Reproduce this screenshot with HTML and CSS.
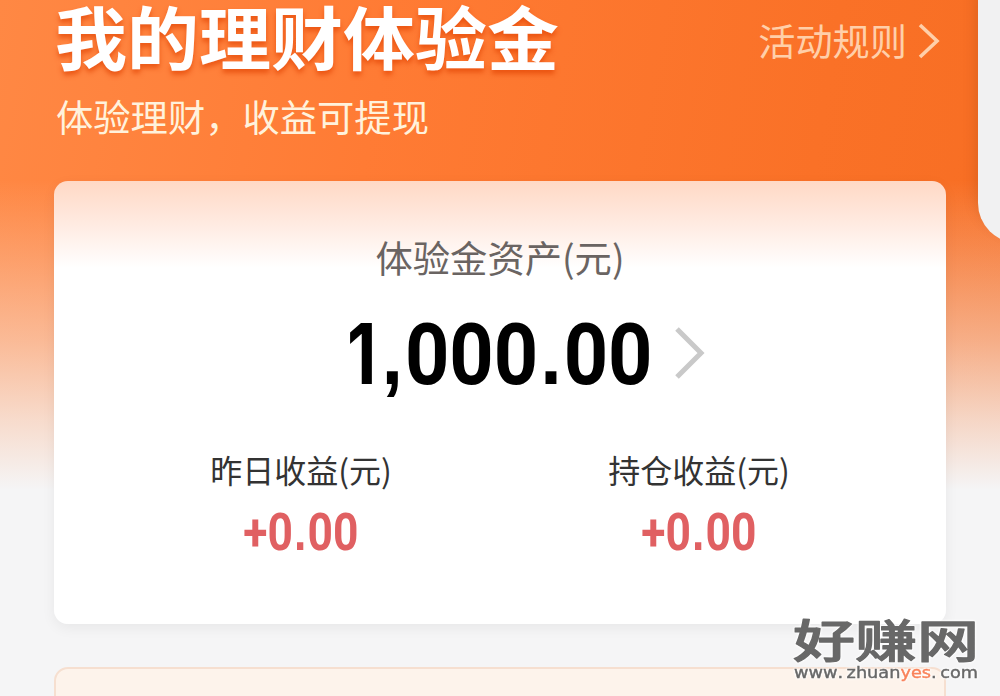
FILE: index.html
```
<!DOCTYPE html>
<html lang="zh-CN">
<head>
    <meta charset="UTF-8">
    <meta name="viewport" content="width=device-width, initial-scale=1.0">
    <title>我的理财体验金</title>
    <link rel="stylesheet" href="styles.css">
</head>
<body>
    <div class="page">
        <header class="header">
            <div>
                <h1>我的理财体验金</h1>
                <p class="subtitle">体验理财，收益可提现</p>
            </div>
            <a class="rules">
                <span>活动规则</span>
                <svg width="22" height="36" viewBox="0 0 22 36"><path d="M2 2 L19 18 L2 34"/></svg>
            </a>
        </header>

        <main class="card">
            <div class="card-label">体验金资产(元)</div>
            <div class="amount">
                <span class="amount-value"><span class="one">1</span><span class="punct">,</span>000<span class="punct">.</span>00</span>
                <svg width="30" height="52" viewBox="0 0 30 52"><path d="M2 2 L26 26 L2 50"/></svg>
            </div>
            <div class="stats">
                <div class="stat">
                    <div class="stat-label">昨日收益(元)</div>
                    <div class="stat-value">+0<span class="punct">.</span>00</div>
                </div>
                <div class="stat">
                    <div class="stat-label">持仓收益(元)</div>
                    <div class="stat-value">+0<span class="punct">.</span>00</div>
                </div>
            </div>
        </main>

        <section class="next-card"></section>
    </div>

    <!-- Panel lateral -->
    <div class="side">
        <div class="side-panel"></div>
    </div>

    <!-- Marca de agua -->
    <svg class="watermark" width="200" height="84" viewBox="0 0 200 84">
        <text class="wm-name" transform="scale(1 .73)" x="6" y="69">好赚网</text>
        <text class="wm-url" x="7" y="69.5" textLength="184" lengthAdjust="spacingAndGlyphs">www<tspan class="wm-dot">.</tspan>zhuan<tspan class="wm-yes">yes</tspan><tspan class="wm-dot">.</tspan>com</text>
    </svg>
</body>
</html>
```
FILE: styles.css
```
* {
    box-sizing: border-box;
}

body {
    margin: 0;
    height: 696px;
    overflow: hidden;
    position: relative;
    font-family: "Noto Sans CJK SC", sans-serif;
    background: #f5f5f6;
}

.page {
    height: 696px;
    padding: 0 54px;
    overflow: hidden;
    background: linear-gradient(to bottom, rgba(245, 245, 246, 0) 180px, rgba(245, 245, 246, 0.2) 250px, rgba(245, 245, 246, 0.47) 340px, rgba(245, 245, 246, 0.77) 420px, #f5f5f6 490px), linear-gradient(100deg, #ff8844 0%, #ff7b34 35%, #fa7127 75%, #f66d22 100%);
}

.header {
    display: flex;
    justify-content: space-between;
    height: 181px;
}

h1 {
    margin: 0;
    padding-left: 1px;
    font-size: 72px;
    line-height: 70px;
    font-weight: 700;
    color: #fff;
    text-shadow: 0 4px 5px rgba(225, 65, 0, 0.65);
    transform: scaleY(0.97);
}

.subtitle {
    margin: 19px 0 0 2px;
    font-size: 37.3px;
    line-height: 54px;
    color: #fff2dc;
}

.rules {
    display: flex;
    align-items: center;
    gap: 11px;
    height: 82px;
    padding-right: 6px;
    font-size: 37.2px;
    color: #ffcfa9;
}

.rules span {
    margin-top: -3px;
}

svg path {
    fill: none;
    stroke: #ffcfa9;
    stroke-width: 3.6;
}

.card {
    height: 443px;
    padding-top: 49px;
    border-radius: 14px;
    background: linear-gradient(to bottom, #ffd9c5 0, #ffe7dc 35px, #fff 87px);
    box-shadow: 0 4px 14px rgba(0, 0, 0, 0.06);
}

.card-label {
    font-size: 37.3px;
    line-height: 54px;
    text-align: center;
    color: #6a6462;
}

.amount {
    display: flex;
    align-items: center;
    justify-content: center;
    height: 138px;
    padding-left: 52px;
    gap: 24px;
}

.amount-value {
    width: 304px;
    font-family: Roboto, sans-serif;
    font-size: 86px;
    line-height: 100px;
    font-weight: 700;
    color: #000;
    white-space: nowrap;
    transform: translateY(1px) scaleX(0.9);
    transform-origin: left;
}

.one {
    display: inline-block;
    width: 36px;
    font-family: Inter, sans-serif;
    font-size: 84px;
    transform: scaleX(0.9);
    transform-origin: left;
}

/* Punto y coma cuadrados */
.punct {
    display: inline-block;
    width: 0.33em;
    font-family: "Liberation Sans", sans-serif;
    text-align: center;
}

.amount path {
    stroke: #c9c9c9;
    stroke-width: 5;
}

.stats {
    display: flex;
    justify-content: space-around;
    padding: 25px 48px 0;
}

.stat {
    text-align: center;
}

.stat-label {
    font-size: 32px;
    line-height: 44px;
    color: #333;
}

.stat-value {
    margin-top: 12px;
    font-family: Roboto, sans-serif;
    font-size: 51px;
    line-height: 60px;
    font-weight: 700;
    color: #e06062;
    transform: scaleX(0.87);
}

.next-card {
    height: 60px;
    margin-top: 43px;
    border: 2px solid #f6dfd0;
    border-radius: 14px;
    background: #fdf3eb;
}

.side {
    position: absolute;
    top: 0;
    right: 0;
    width: 52px;
    height: 280px;
    overflow: hidden;
}

.side-panel {
    width: 80px;
    height: 243px;
    margin-left: 30px;
    border-radius: 0 0 0 40px;
    background: #f1f1f2;
    box-shadow: -2px -10px 14px rgba(120, 50, 10, 0.2);
}

.watermark {
    position: absolute;
    left: 787px;
    top: 608px;
    filter: drop-shadow(0 0 1px #fff) drop-shadow(0 0 1px #fff);
}

.wm-name {
    font-size: 62px;
    font-weight: 500;
    fill: #686868;
    stroke: #686868;
    stroke-width: 1.6;
    stroke-linejoin: round;
}

.wm-url {
    font-family: "DejaVu Sans", sans-serif;
    font-size: 15px;
    fill: #686868;
    stroke: #686868;
    stroke-width: 0.4;
}

.wm-dot {
    letter-spacing: 3px;
}

.wm-yes {
    fill: #f9825a;
    stroke: #f9825a;
}
```
